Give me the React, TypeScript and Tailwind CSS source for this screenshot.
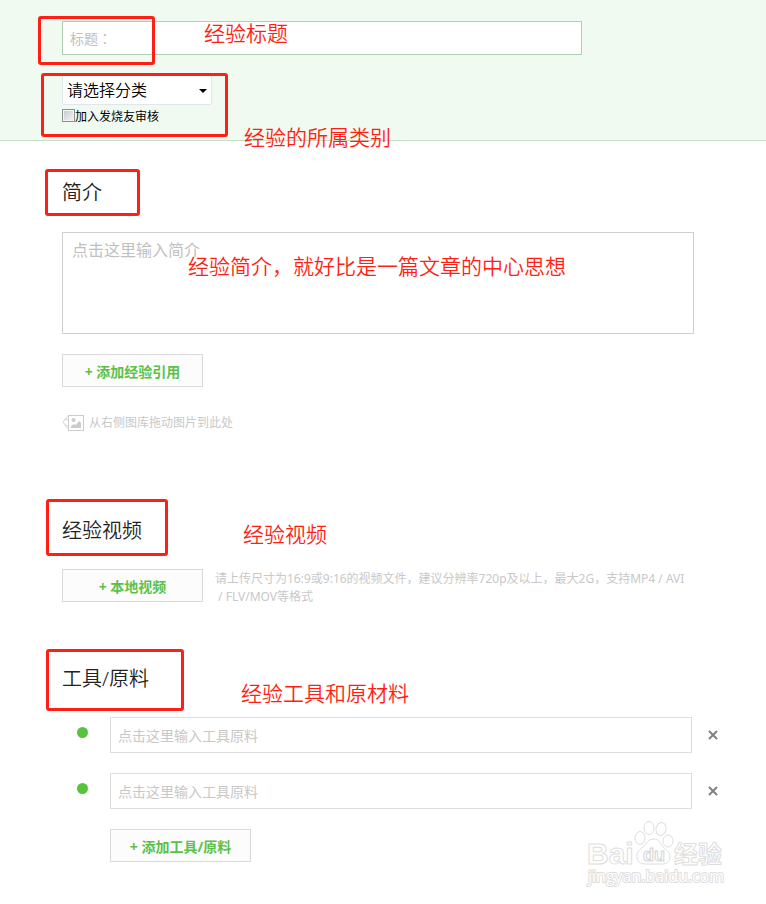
import React from "react";

const materials = [1, 2];

function Mark({ className }: { className: string }) {
  return (
    <div
      aria-hidden="true"
      className={"pointer-events-none absolute rounded-[3px] border-3 border-[#ff1f14] " + className}
    />
  );
}

function Note({ className, children }: { className: string; children: React.ReactNode }) {
  return (
    <p
      className={
        "pointer-events-none absolute whitespace-nowrap text-[21px] leading-7 font-[350] text-[#ff1f14] " + className
      }
    >
      {children}
    </p>
  );
}

function Heading({ children }: { children: React.ReactNode }) {
  return <h2 className="text-xl leading-7 font-[350] text-[#222222]">{children}</h2>;
}

function AddButton({ children }: { children: React.ReactNode }) {
  return (
    <button
      type="button"
      className="h-[33px] w-[141px] shrink-0 border border-[#d9d9d9] bg-[#fcfcfc] pt-[2px] text-center text-sm leading-5 font-bold text-[#5cc14a]"
    >
      + {children}
    </button>
  );
}

function PhotosIcon() {
  return (
    <svg width="22" height="18" viewBox="0 0 22 18" fill="none" aria-hidden="true">
      <path d="M5.500 2.500L1 8l4.500 6.500M3 5l3 1M3 11l3 1" stroke="#d4d4d4" />
      <rect x="6.500" y="1.500" width="15" height="15" fill="#fff" stroke="#cccccc" />
      <circle cx="11.500" cy="6" r="2" fill="#cccccc" />
      <path d="M9 14v-2l3-2 2 1 3-4 2 2v5z" fill="#cccccc" />
    </svg>
  );
}

function CloseIcon() {
  return (
    <svg width="10" height="10" viewBox="0 0 10 10" aria-hidden="true">
      <path d="M1 1l8 8M9 1l-8 8" stroke="#808080" strokeWidth="2" />
    </svg>
  );
}

function Watermark() {
  return (
    <svg
      width="140"
      height="70"
      viewBox="0 0 140 70"
      className="pointer-events-none absolute -top-3 right-1"
      fill="#ffffff"
      stroke="#dedede"
      strokeWidth="1"
      role="img"
      aria-label="Baidu"
    >
      <ellipse cx="54" cy="21" rx="5" ry="6.500" />
      <ellipse cx="63" cy="11" rx="5" ry="6.500" />
      <ellipse cx="75" cy="12" rx="5" ry="6.500" transform="rotate(12 75 12)" />
      <ellipse cx="82" cy="24" rx="5" ry="6" />
      <path d="M68 22c-6 0-8 5-11 8-4 3-7 6-6 11 1 5 5 6 9 6h16c4 0 8-2 8-7 0-5-4-7-7-10-3-4-4-8-9-8z" />
      <g fontWeight="700" strokeLinejoin="round">
        <g fontFamily="'Liberation Sans', sans-serif">
          <text x="1" y="47" fontSize="30">Bai</text>
          <text x="57" y="44" fontSize="18" stroke="#d4d4d4">du</text>
        </g>
        <g fontFamily="'Open Sans', 'Noto Sans CJK SC', sans-serif">
          <text x="88" y="46" fontSize="24">经验</text>
          <text x="2" y="65" fontSize="16" fontWeight="400" strokeWidth="2" paintOrder="stroke">
            jingyan.baidu.com
          </text>
        </g>
      </g>
    </svg>
  );
}

export default function App() {
  return (
    <main
      lang="zh-CN"
      className="bg-white pb-[42px] font-['Noto_Sans','Noto_Sans_CJK_SC',sans-serif] text-[#333333]"
    >
      <header className="relative h-[141px] border-b border-[#c5dfc5] bg-[#f0faf0] pt-[21px] pr-9 pl-[62px]">
        <input
          type="text"
          lang="zh-TW"
          aria-label="标题"
          placeholder="标题："
          className="block h-[34px] w-full max-w-[520px] border border-[#afcfb0] bg-white px-[7px] font-['Noto_Sans_CJK_TC',sans-serif] text-sm outline-none placeholder:text-[#c0c0c0]"
        />
        <div className="relative mt-5 w-[150px]">
          <select
            aria-label="分类"
            className="block h-[30px] w-full appearance-none rounded-xs border border-[#e0e6ee] bg-white pl-1 text-base leading-6 font-[350] text-black"
          >
            <option>请选择分类</option>
          </select>
          <svg width="8" height="4" viewBox="0 0 8 4" className="pointer-events-none absolute top-[14px] right-[5px]" aria-hidden="true">
            <path d="M0 0h8L4 4z" fill="#000" />
          </svg>
        </div>
        <div className="mt-[2px] flex h-5 items-center">
          <input
            id="review"
            type="checkbox"
            className="-mt-1 size-[13px] appearance-none border border-[#8e8f8f] bg-linear-to-br from-[#c3c7cf] to-[#f6f6f6] shadow-[inset_0_0_0_1px_#f4f4f4]"
          />
          <label htmlFor="review" className="text-xs leading-5 text-black">
            加入发烧友审核
          </label>
        </div>
        <Mark className="top-4 left-[38px] h-[49px] w-[117px]" />
        <Mark className="top-[73px] left-[41px] h-16 w-[187px]" />
        <Note className="top-[19px] left-[204px]">经验标题</Note>
        <Note className="top-[123px] left-[244px] z-10">经验的所属类别</Note>
      </header>

      <section className="relative pt-[38px] pr-9 pl-[62px]">
        <Heading>简介</Heading>
        <textarea
          aria-label="简介"
          placeholder="点击这里输入简介"
          className="mt-[25px] block h-[102px] w-full max-w-[632px] resize-none border border-[#d0d0d0] bg-white px-[9px] py-[5px] text-base leading-6 outline-none placeholder:text-[#bfbfbf]"
        />
        <div className="mt-5">
          <AddButton>添加经验引用</AddButton>
        </div>
        <p className="mt-[26px] flex items-center gap-[5px] text-xs leading-5 text-[#c8c8c8]">
          <PhotosIcon />
          从右侧图库拖动图片到此处
        </p>
        <Mark className="top-7 left-[45px] h-[47px] w-[95px]" />
        <Note className="top-[111px] left-[188px]">经验简介，就好比是一篇文章的中心思想</Note>
      </section>

      <section className="relative pt-[84px] pr-9 pl-[62px]">
        <Heading>经验视频</Heading>
        <div className="mt-6 flex gap-3">
          <AddButton>本地视频</AddButton>
          <p className="pt-px text-xs leading-[18px] text-[#c8c8c8]">
            请上传尺寸为16:9或9:16的视频文件，建议分辨率720p及以上，最大2G，支持MP4 / AVI
            <br />
            &nbsp;/ FLV/MOV等格式
          </p>
        </div>
        <Mark className="top-[66px] left-[46px] h-[57px] w-[122px]" />
        <Note className="top-[87px] left-[243px]">经验视频</Note>
      </section>

      <section className="relative pt-[59px] pr-9 pl-[62px]">
        <Heading>工具/原料</Heading>
        <ul className="mt-6 flex flex-col gap-5">
          {materials.map((n) => (
            <li key={n} className="flex">
              <span className="mt-[10px] mr-[22px] ml-[15px] size-[11px] shrink-0 rounded-full bg-[#54c53a]" />
              <input
                type="text"
                aria-label={"工具原料 " + n}
                placeholder="点击这里输入工具原料"
                className="h-9 min-w-0 flex-1 border border-[#dedede] bg-white px-[7px] text-sm outline-none placeholder:text-[#c8c8c8]"
              />
              <button type="button" aria-label="删除" className="flex w-[38px] items-center justify-center pl-1">
                <CloseIcon />
              </button>
            </li>
          ))}
        </ul>
        <div className="relative mt-5 pl-12">
          <AddButton>添加工具/原料</AddButton>
          <Watermark />
        </div>
        <Mark className="top-[43px] left-[46px] h-[62px] w-[138px]" />
        <Note className="top-[73px] left-[241px]">经验工具和原材料</Note>
      </section>
    </main>
  );
}
